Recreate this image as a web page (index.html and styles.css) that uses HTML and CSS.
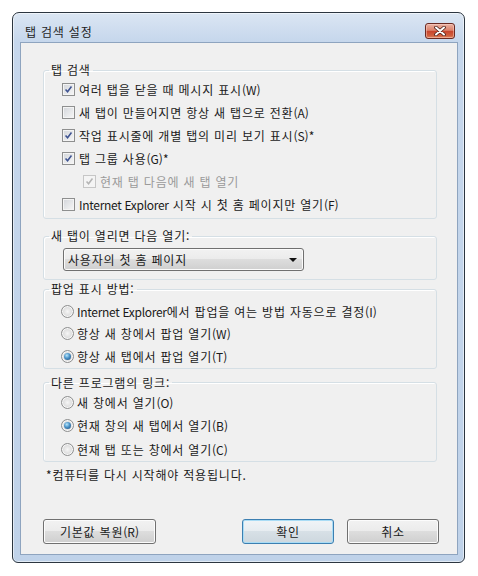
FILE: index.html
```html
<!DOCTYPE html>
<html lang="ko">
<head>
<meta charset="utf-8">
<title>탭 검색 설정</title>
<link rel="stylesheet" href="styles.css">
</head>
<body>
<div class="window">
  <div class="titlebar">
    <span class="title">탭 검색 설정</span>
    <span class="close"><svg width="14" height="10" viewBox="0 0 14 10"><path d="M3 1.5 L11 8.5 M11 1.5 L3 8.5" stroke="#4a2019" stroke-width="3.6" stroke-linecap="round"/><path d="M3 1.5 L11 8.5 M11 1.5 L3 8.5" stroke="#fff" stroke-width="2" stroke-linecap="round"/></svg></span>
  </div>
  <div class="client">
    <fieldset class="group g1">
      <legend>탭 검색</legend>
      <div class="row"><span class="chk on"><svg viewBox="0 0 13 13"><path d="M3 6.5 L5.4 9.2 L10 3" fill="none" stroke="#3e5391" stroke-width="1.8"/></svg></span>여러 탭을 닫을 때 메시지 표시<span class="lat">(W)</span></div>
      <div class="row"><span class="chk"></span>새 탭이 만들어지면 항상 새 탭으로 전환<span class="lat">(A)</span></div>
      <div class="row"><span class="chk on"><svg viewBox="0 0 13 13"><path d="M3 6.5 L5.4 9.2 L10 3" fill="none" stroke="#3e5391" stroke-width="1.8"/></svg></span>작업 표시줄에 개별 탭의 미리 보기 표시<span class="lat">(S)*</span></div>
      <div class="row"><span class="chk on"><svg viewBox="0 0 13 13"><path d="M3 6.5 L5.4 9.2 L10 3" fill="none" stroke="#3e5391" stroke-width="1.8"/></svg></span>탭 그룹 사용<span class="lat">(G)*</span></div>
      <div class="row sub disabled"><span class="chk on"><svg viewBox="0 0 13 13"><path d="M3 6.5 L5.4 9.2 L10 3" fill="none" stroke="#b4b4b4" stroke-width="1.8"/></svg></span>현재 탭 다음에 새 탭 열기</div>
      <div class="row"><span class="chk"></span><span class="lat ie">Internet Explorer</span>&nbsp;시작 시 첫 홈 페이지만 열기<span class="lat">(F)</span></div>
    </fieldset>

    <fieldset class="group g2">
      <legend>새 탭이 열리면 다음 열기:</legend>
      <div class="select"><span>사용자의 첫 홈 페이지</span><span class="arrow"></span></div>
    </fieldset>

    <fieldset class="group g3">
      <legend>팝업 표시 방법:</legend>
      <div class="row radio-row"><span class="radio"></span><span class="lat ie">Internet Explorer</span>에서 팝업을 여는 방법 자동으로 결정<span class="lat">(I)</span></div>
      <div class="row radio-row"><span class="radio"></span>항상 새 창에서 팝업 열기<span class="lat">(W)</span></div>
      <div class="row radio-row"><span class="radio on"></span>항상 새 탭에서 팝업 열기<span class="lat">(T)</span></div>
    </fieldset>

    <fieldset class="group g4">
      <legend>다른 프로그램의 링크:</legend>
      <div class="row radio-row"><span class="radio"></span>새 창에서 열기<span class="lat">(O)</span></div>
      <div class="row radio-row"><span class="radio on"></span>현재 창의 새 탭에서 열기<span class="lat">(B)</span></div>
      <div class="row radio-row"><span class="radio"></span>현재 탭 또는 창에서 열기<span class="lat">(C)</span></div>
    </fieldset>

    <p class="note">*컴퓨터를 다시 시작해야 적용됩니다.</p>

    <div class="buttons">
      <button class="btn wide">기본값 복원<span class="lat">(R)</span></button>
      <span class="spacer"></span>
      <button class="btn default">확인</button>
      <button class="btn">취소</button>
    </div>
  </div>
</div>
</body>
</html>
```

FILE: styles.css
```css
* { box-sizing: border-box; }

body {
  margin: 0;
  background: #fff;
  font-family: "Noto Sans CJK KR", "Noto Sans", sans-serif;
  font-size: 12px;
  letter-spacing: 0.8px;
  color: #1a1a1a;
}

.lat { letter-spacing: 0; }
.lat.ie { letter-spacing: -0.3px; }

.window {
  margin: 12px 0 0 12px;
  width: 453px;
  height: 551px;
  border: 1px solid #2c3640;
  border-radius: 7px 7px 6px 6px;
  background: linear-gradient(#dbe6f3, #c6d7ec 28px, #bfd2e9 100%);
  box-shadow: inset 0 0 0 1px rgba(255,255,255,0.55);
  padding: 0 6px 7px 7px;
  display: flex;
  flex-direction: column;
}

.titlebar {
  height: 29px;
  display: flex;
  justify-content: space-between;
  align-items: flex-start;
  padding-left: 5px;
}

.title {
  margin-top: 11px;
  line-height: 16px;
  color: #1e1e1e;
}

.close {
  margin-top: 10px;
  margin-right: 3px;
  width: 30px;
  height: 16px;
  border: 1px solid #6a2a22;
  border-radius: 3px;
  background: linear-gradient(#eab2a3, #dc836c 45%, #c8452d 52%, #d1613f 85%, #e08c68);
  box-shadow: inset 0 0 0 1px rgba(255,220,210,0.45);
  display: flex;
  align-items: center;
  justify-content: center;
}

.client {
  flex: 1;
  background: #f0f0f0;
  border: 1px solid #8ea4bf;
  padding: 0 20px 10px 22px;
  display: flex;
  flex-direction: column;
}

.group {
  margin: 0;
  border: 1px solid #d5dfe5;
  border-radius: 3px;
  padding: 0;
  box-shadow: inset 1px 1px 0 #fff;
  min-width: 0;
}

.group legend {
  margin-left: 5px;
  padding: 0 2px;
  line-height: 16px;
}

.g1 { margin-top: 19px; padding-bottom: 2px; }
.g2 { margin-top: 9px; padding-bottom: 8px; }
.g3 { margin-top: 1px; padding-top: 3px; }
.g4 { margin-top: 6px; padding-top: 0; }

.row {
  display: flex;
  align-items: center;
  height: 23px;
  padding-left: 18px;
  white-space: nowrap;
}

.row > .chk, .row > .radio { margin-right: 4px; }

.row.sub { padding-left: 39px; }
.row.disabled { color: #9a9a9a; }

.radio-row { padding-left: 17px; }
.radio-row > .radio { margin-right: 3px; }
.g3 .radio-row { height: 22.5px; }
.g4 .radio-row { height: 23.5px; }

.chk {
  width: 13px;
  height: 13px;
  flex: none;
  border: 1px solid #8e8f8f;
  background: linear-gradient(135deg, #d2d5da, #f7f7f7);
  box-shadow: inset 0 0 0 1px #f4f4f4;
  display: flex;
}
.chk svg { width: 11px; height: 11px; }
.disabled .chk { border-color: #c6c6c6; background: #f4f4f4; }

.radio {
  width: 13px;
  height: 13px;
  flex: none;
  border: 1px solid #8e8f8f;
  border-radius: 50%;
  background: radial-gradient(circle at 50% 50%, #f6f6f6 0, #e2e2e2 45%, #cfd0d2 100%);
  box-shadow: inset 0 0 0 1px #f8f8f8;
  display: flex;
  align-items: center;
  justify-content: center;
}
.radio.on::after {
  content: "";
  width: 7px;
  height: 7px;
  border-radius: 50%;
  background: radial-gradient(circle at 40% 35%, #b8e6fb 0, #4b93c8 45%, #1b4776 100%);
}

.select {
  margin: 4px 0 0 19px;
  width: 241px;
  height: 23px;
  border: 1px solid #707070;
  border-radius: 3px;
  background: linear-gradient(#f2f2f2, #ebebeb 50%, #dddddd 50%, #cfcfcf);
  box-shadow: inset 0 0 0 1px #fbfbfb;
  display: flex;
  align-items: center;
  justify-content: space-between;
  padding: 0 6px 0 4px;
}
.arrow {
  width: 0;
  height: 0;
  border-left: 4px solid transparent;
  border-right: 4px solid transparent;
  border-top: 4px solid #111;
}

.note {
  margin: 5px 0 0 3px;
  line-height: 16px;
}

.buttons {
  margin-top: auto;
  margin-right: -2px;
  display: flex;
  gap: 13px;
}
.spacer { flex: 1; margin-left: -13px; }

.btn {
  height: 25px;
  width: 92px;
  font-family: inherit;
  font-size: 12px;
  letter-spacing: 0.8px;
  color: #1a1a1a;
  border: 1px solid #707070;
  border-radius: 3px;
  background: linear-gradient(#f2f2f2, #ebebeb 50%, #dddddd 50%, #cfcfcf);
  box-shadow: inset 0 0 0 1px #fcfcfc;
  padding: 0;
}
.btn.wide { width: 113px; }
.btn.default {
  border-color: #3c7fb1;
  box-shadow: inset 0 0 0 1px #a9dcf5;
  background: linear-gradient(#f0f4f7, #e6ecf0 50%, #d7e0e6 50%, #cdd7de);
}
```
